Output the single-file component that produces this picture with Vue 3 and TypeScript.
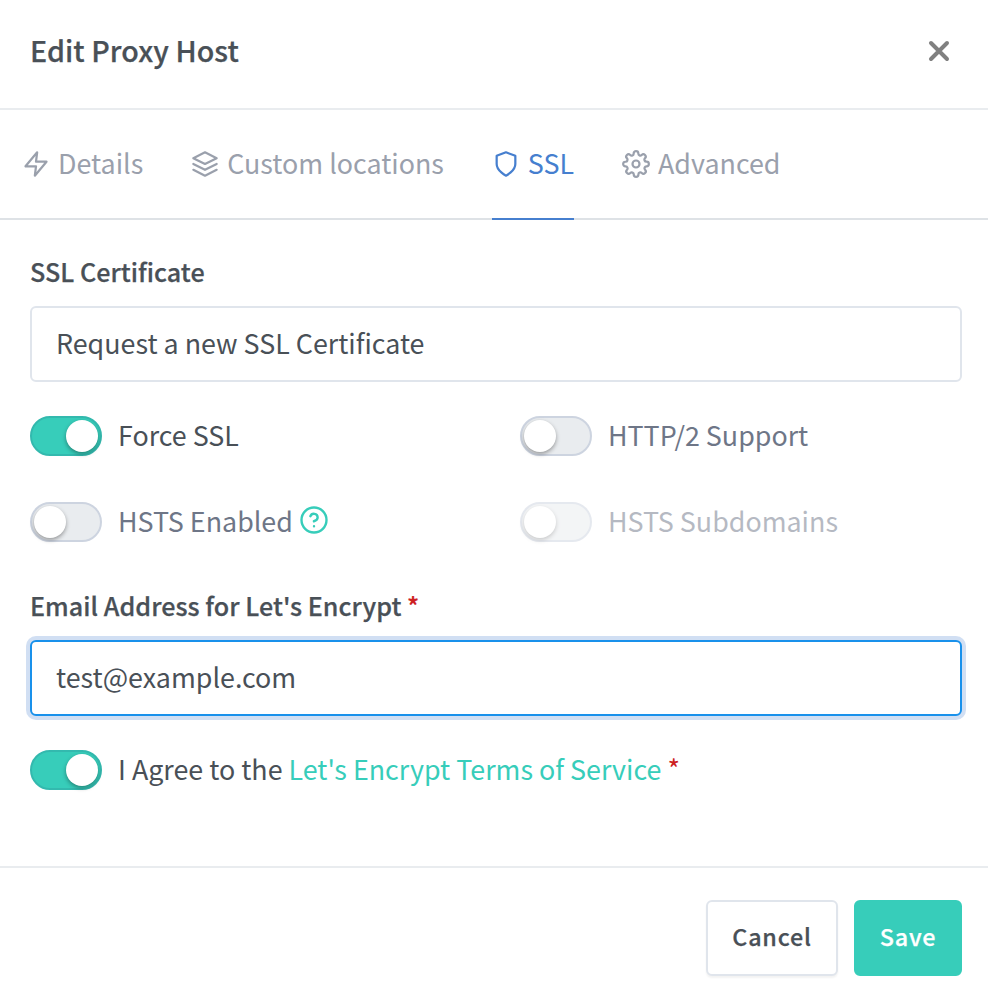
<script setup lang="ts">
import { ref } from 'vue'

interface Tab {
  id: string
  label: string
  paths: string[]
}

const tabs: Tab[] = [
  { id: 'details', label: 'Details', paths: ['M13 2 3 14h9l-1 8 10-12h-9l1-8z'] },
  {
    id: 'locations',
    label: 'Custom locations',
    paths: ['M12 2 2 7l10 5 10-5-10-5z', 'M2 17l10 5 10-5', 'M2 12l10 5 10-5'],
  },
  { id: 'ssl', label: 'SSL', paths: ['M12 22s8-4 8-10V5l-8-3-8 3v7c0 6 8 10 8 10z'] },
  {
    id: 'advanced',
    label: 'Advanced',
    paths: [
      'M15 12a3 3 0 1 1-6 0 3 3 0 0 1 6 0z',
      'M19.4 15a1.65 1.65 0 0 0 .33 1.82l.06.06a2 2 0 0 1-2.83 2.83l-.06-.06a1.65 1.65 0 0 0-1.82-.33 1.65 1.65 0 0 0-1 1.51V21a2 2 0 0 1-4 0v-.09A1.65 1.65 0 0 0 9 19.4a1.65 1.65 0 0 0-1.82.33l-.06.06a2 2 0 0 1-2.83-2.83l.06-.06a1.65 1.65 0 0 0 .33-1.82 1.65 1.65 0 0 0-1.51-1H3a2 2 0 0 1 0-4h.09A1.65 1.65 0 0 0 4.6 9a1.65 1.65 0 0 0-.33-1.82l-.06-.06a2 2 0 0 1 2.83-2.83l.06.06a1.65 1.65 0 0 0 1.82.33H9a1.65 1.65 0 0 0 1-1.51V3a2 2 0 0 1 4 0v.09a1.65 1.65 0 0 0 1 1.51 1.65 1.65 0 0 0 1.82-.33l.06-.06a2 2 0 0 1 2.83 2.83l-.06.06a1.65 1.65 0 0 0-.33 1.82V9a1.65 1.65 0 0 0 1.51 1H21a2 2 0 0 1 0 4h-.09a1.65 1.65 0 0 0-1.51 1z',
    ],
  },
]

const activeTab = ref('ssl')
const certificate = ref('Request a new SSL Certificate')
const email = ref('test@example.com')
const forceSsl = ref(true)
const http2 = ref(false)
const hsts = ref(false)
const hstsSubdomains = ref(false)
const agree = ref(true)
</script>

<template>
  <div class="modal">
    <header class="header">
      <h5 class="title">Edit Proxy Host</h5>
      <button class="close" type="button" aria-label="Close">
        <svg viewBox="0 0 22 22"><path d="M3 3l16 16M19 3L3 19" /></svg>
      </button>
    </header>

    <nav class="tabs">
      <a
        v-for="tab in tabs"
        :key="tab.id"
        class="tab"
        :class="[tab.id, { active: tab.id === activeTab }]"
        @click="activeTab = tab.id"
      >
        <svg class="tab-icon" viewBox="0 0 24 24">
          <path v-for="d in tab.paths" :key="d" :d="d" />
        </svg>
        <span class="text">{{ tab.label }}</span>
      </a>
    </nav>

    <main class="body">
      <div class="label">SSL Certificate</div>
      <input v-model="certificate" class="control" type="text" readonly />

      <div class="grid">
        <label class="switch">
          <input v-model="forceSsl" type="checkbox" /><i class="track"></i>
          <span class="text">Force SSL</span>
        </label>
        <label class="switch">
          <input v-model="http2" type="checkbox" /><i class="track"></i>
          <span class="text">HTTP/2 Support</span>
        </label>
        <label class="switch">
          <input v-model="hsts" type="checkbox" /><i class="track"></i>
          <span class="text">HSTS Enabled</span>
          <svg class="help" viewBox="0 0 24 24">
            <circle cx="12" cy="12" r="10" />
            <path d="M9.09 9a3 3 0 0 1 5.83 1c0 2-3 3-3 3M12 17h.01" />
          </svg>
        </label>
        <label class="switch disabled">
          <input v-model="hstsSubdomains" type="checkbox" disabled /><i class="track"></i>
          <span class="text">HSTS Subdomains</span>
        </label>
      </div>

      <div class="label">Email Address for Let's Encrypt <span class="required">*</span></div>
      <input v-model="email" class="control focused" type="text" />

      <label class="switch agree">
        <input v-model="agree" type="checkbox" /><i class="track"></i>
        <span class="text">I Agree to the <a class="link">Let's Encrypt Terms of Service</a> <span class="required">*</span></span>
      </label>
    </main>

    <footer class="footer">
      <button class="btn cancel" type="button">Cancel</button>
      <button class="btn save" type="button">Save</button>
    </footer>
  </div>
</template>

<style>
body {
  background: #fff;
}
</style>

<style scoped>
.modal,
.modal * {
  box-sizing: border-box;
}
.modal {
  width: 988px;
  height: 1000px;
  overflow: hidden;
  display: flex;
  flex-direction: column;
  background: #fff;
  color: #495057;
  font-family: "Noto Sans CJK SC", "Noto Sans", sans-serif;
  font-size: 26.85px;
  line-height: 40px;
}
svg {
  display: block;
  flex: none;
  fill: none;
  stroke: currentColor;
  stroke-linecap: round;
  stroke-linejoin: round;
}
.header {
  height: 110px;
  flex: none;
  display: flex;
  align-items: center;
  justify-content: space-between;
  padding: 0 38px 9px 30px;
  border-bottom: 2px solid #e9ecef;
}
.title,
.label,
.btn {
  font-weight: 500;
  -webkit-text-stroke: 0.25px currentColor;
}
.title {
  margin: 0;
  font-size: 28.6px;
  letter-spacing: 0.08px;
}
.close {
  width: 22px;
  height: 22px;
  margin-top: 2px;
  padding: 0;
  border: 0;
  background: none;
  color: #808080;
}
.close svg {
  width: 22px;
  height: 22px;
  stroke-width: 4;
}
.tabs {
  height: 110px;
  flex: none;
  display: flex;
  gap: 48px;
  padding-left: 22px;
  border-bottom: 2px solid #dee2e6;
}
.tab {
  height: 110px;
  display: flex;
  align-items: center;
  gap: 8px;
  color: #9aa0ac;
  white-space: nowrap;
  border-bottom: 2px solid transparent;
}
.tab.active {
  color: #467fcf;
  border-bottom-color: #467fcf;
}
.tab-icon {
  width: 28px;
  height: 28px;
  stroke-width: 1.9;
}
.text {
  padding-bottom: 2px;
  white-space: nowrap;
}
.tabs .text {
  padding-bottom: 3px;
}
.body {
  flex: 1;
  padding: 30px 26px 0 30px;
}
.label {
  height: 42px;
  margin-bottom: 14px;
  font-size: 25.1px;
  line-height: 42px;
  letter-spacing: 0.05px;
}
.required {
  color: #cd201f;
}
.control {
  display: block;
  width: 932px;
  height: 76px;
  padding: 0 24px 3px;
  border: 2px solid #e0e5ec;
  border-radius: 6px;
  outline: 0;
  background: #fff;
  color: #495057;
  font: inherit;
}
.control.focused {
  border-color: #1991eb;
  box-shadow: 0 0 0 4px rgba(70, 127, 207, 0.25);
}
.grid {
  display: grid;
  grid-template-columns: 490px 1fr;
  row-gap: 46px;
  margin: 34px 0 42px;
}
.switch {
  height: 40px;
  display: flex;
  align-items: center;
  color: #6e7687;
}
.switch input {
  display: none;
}
.track {
  flex: none;
  width: 72px;
  height: 40px;
  margin-right: 16px;
  padding: 2px;
  border: 2px solid #cdd4e0;
  border-radius: 20px;
  background: #e9ecef;
}
.track::before {
  content: "";
  display: block;
  width: 32px;
  height: 32px;
  border-radius: 50%;
  background: #fff;
  box-shadow: 0 2px 4px rgba(0, 0, 0, 0.36);
}
input:checked + .track {
  border-color: #33b9ae;
  background: #37cdba;
}
input:checked + .track::before {
  margin-left: 32px;
}
input:checked ~ .text {
  color: #495057;
}
.disabled {
  opacity: 0.5;
}
.help {
  width: 30px;
  height: 30px;
  margin: 0 0 5px 6px;
  stroke: #37cdba;
  stroke-width: 1.9;
}
.agree {
  margin-top: 34px;
}
.link {
  color: #37cdba;
}
.footer {
  height: 134px;
  flex: none;
  display: flex;
  justify-content: flex-end;
  gap: 16px;
  padding: 32px 26px 0 0;
  border-top: 2px solid #e9ecef;
}
.btn {
  height: 76px;
  padding: 0 0 4px;
  border: 2px solid #e0e5ec;
  border-radius: 6px;
  font-family: inherit;
  font-size: 23.3px;
  letter-spacing: 0.8px;
}
.cancel {
  width: 132px;
  background: #fff;
  color: #495057;
  box-shadow: 0 2px 2px rgba(0, 0, 0, 0.05);
}
.save {
  width: 108px;
  border-color: #37cdba;
  background: #37cdba;
  color: #fff;
}
</style>
